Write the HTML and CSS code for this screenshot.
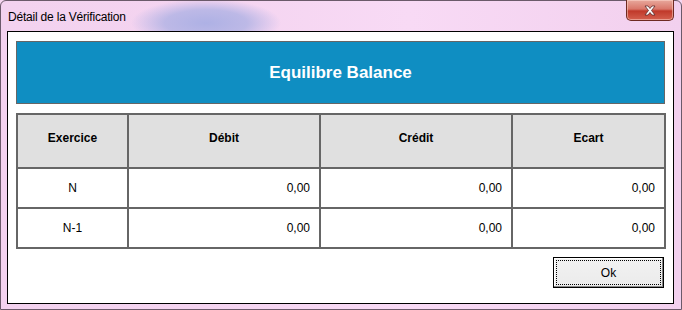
FILE: index.html
```html
<!DOCTYPE html>
<html lang="fr">

<head>
    <meta charset="UTF-8">
    <meta name="viewport" content="width=device-width, initial-scale=1.0">
    <title>Détail de la Vérification</title>
    <link rel="stylesheet" href="styles.css">
</head>

<body>
    <div class="window">
        <div class="titlebar">
            <span class="title">Détail de la Vérification</span>
            <span class="close">
                <svg width="16" height="11" viewBox="0 0 16 11">
                    <path d="M3 1 L6 1 L8 3.5 L10 1 L13 1 L9.5 5.5 L13 10 L10 10 L8 7.5 L6 10 L3 10 L6.5 5.5 Z"
                        fill="#fff" stroke="#5a2a2a" stroke-width="0.8" />
                </svg>
            </span>
        </div>

        <div class="client">
            <div class="banner">Equilibre Balance</div>

            <table class="grid">
                <colgroup>
                    <col class="c-ex">
                    <col class="c-num">
                    <col class="c-num">
                    <col class="c-ecart">
                </colgroup>
                <tr class="head">
                    <th>Exercice</th>
                    <th>Débit</th>
                    <th>Crédit</th>
                    <th>Ecart</th>
                </tr>
                <tr>
                    <td class="ex">N</td>
                    <td>0,00</td>
                    <td>0,00</td>
                    <td>0,00</td>
                </tr>
                <tr>
                    <td class="ex">N-1</td>
                    <td>0,00</td>
                    <td>0,00</td>
                    <td>0,00</td>
                </tr>
            </table>

            <div class="footer">
                <button class="btn"><span>Ok</span></button>
            </div>
        </div>
    </div>
</body>

</html>
```

FILE: styles.css
```css
html,
body {
    margin: 0;
    padding: 0;
    width: 682px;
    height: 310px;
    overflow: hidden;
    background: #f6d6f1;
}

.window {
    box-sizing: border-box;
    width: 682px;
    height: 310px;
    border: 1px solid #6b5a6a;
    border-radius: 6px 6px 0 0;
    background:
        radial-gradient(ellipse 75px 24px at 205px 22px, rgba(170, 175, 228, 0.95) 0%, rgba(175, 178, 228, 0.8) 55%, rgba(175, 178, 228, 0) 100%),
        linear-gradient(90deg, #f3d2ef 0%, #f4d4f0 30%, #f8daf5 60%, #f2d0ee 100%);
    display: flex;
    flex-direction: column;
}

.titlebar {
    height: 30px;
    display: flex;
    justify-content: space-between;
    align-items: flex-start;
    padding-left: 7px;
    padding-right: 7px;
}

.title {
    font-family: "Liberation Sans", Arial, sans-serif;
    font-size: 12px;
    color: #000;
    margin-top: 9px;
    letter-spacing: -0.2px;
}

.close {
    width: 46px;
    height: 20px;
    margin-top: -1px;
    border: 1px solid #6e2a22;
    border-top: none;
    border-radius: 0 0 5px 5px;
    background: linear-gradient(#e8a89c 0%, #d9776a 45%, #c0392a 55%, #d4604e 100%);
    display: flex;
    justify-content: center;
    align-items: center;
    box-shadow: inset 0 0 0 1px rgba(255, 220, 210, 0.5);
}

.client {
    flex: 1;
    margin: 0 7px 5px 6px;
    border: 1px solid #000;
    background: #fff;
    padding: 9px 8px 0 8px;
    font-family: "Liberation Sans", Arial, sans-serif;
}

.banner {
    height: 61px;
    border: 1px solid #666;
    background: #0f8ec2;
    color: #fff;
    font-weight: bold;
    font-size: 17px;
    display: flex;
    justify-content: center;
    align-items: center;
    margin-bottom: 9px;
}

.grid {
    width: 648px;
    border-collapse: collapse;
    table-layout: fixed;
    font-size: 12px;
    color: #000;
}

.grid .c-ex {
    width: 111px;
}

.grid .c-num {
    width: 192px;
}

.grid .c-ecart {
    width: 153px;
}

.grid th,
.grid td {
    border: 2px solid #666;
    padding: 0 9px;
}

.grid th {
    height: 46px;
    background: #e0e0e0;
    font-weight: bold;
    text-align: center;
    padding-bottom: 6px;
}

.grid td {
    height: 38px;
    text-align: right;
}

.grid td.ex {
    text-align: center;
}

.footer {
    display: flex;
    justify-content: flex-end;
    margin-top: 8px;
    padding-right: 1px;
}

.btn {
    width: 111px;
    height: 31px;
    border: 1px solid #000;
    background: linear-gradient(#f2f2f2, #ebebeb);
    box-shadow: inset -1px -1px 0 #888, inset 1px 1px 0 #fff;
    padding: 2px;
    font-family: "Liberation Sans", Arial, sans-serif;
    font-size: 12px;
    color: #000;
    cursor: pointer;
}

.btn span {
    display: flex;
    height: 100%;
    box-sizing: border-box;
    border: 1px dotted #000;
    justify-content: center;
    align-items: center;
}
```
